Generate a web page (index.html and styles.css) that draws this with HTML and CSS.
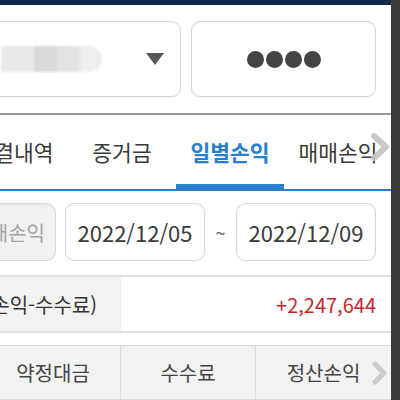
FILE: index.html
```html
<!DOCTYPE html>
<html lang="ko">
<head>
    <meta charset="UTF-8">
    <meta name="viewport" content="width=device-width, initial-scale=1.0">
    <title>일별손익</title>
    <link rel="stylesheet" href="styles.css">
</head>
<body>
    <div class="screen">
        <div class="app">
            <div class="topbar"></div>

            <div class="account-row">
                <div class="account-select">
                    <div class="masked">
                        <span class="m1"></span><span class="m2"></span><span class="m3"></span><span class="m4"></span>
                    </div>
                    <span class="caret"></span>
                </div>
                <div class="password">
                    <span class="dot"></span><span class="dot"></span><span class="dot"></span><span class="dot"></span>
                </div>
            </div>

            <div class="tabs">
                <div class="tab-list">
                    <div class="tab">체결내역</div>
                    <div class="tab">증거금</div>
                    <div class="tab active">일별손익</div>
                    <div class="tab">매매손익</div>
                </div>
                <svg class="more" width="24" height="28" viewBox="0 0 24 28">
                    <polyline points="5,3 17,14 5,25" fill="none" stroke="#c4c4c4" stroke-width="6" stroke-linecap="round" stroke-linejoin="round"/>
                </svg>
            </div>

            <div class="date-row">
                <div class="btn-disabled">매매손익</div>
                <div class="date-input">2022/12/05</div>
                <span class="tilde">~</span>
                <div class="date-input">2022/12/09</div>
            </div>

            <div class="summary">
                <div class="summary-label">정산손익(매매손익-수수료)</div>
                <div class="summary-value">+2,247,644</div>
            </div>

            <div class="table-head">
                <div class="th">약정대금</div>
                <div class="th">수수료</div>
                <div class="th">정산손익</div>
                <svg class="more head-more" width="18" height="24" viewBox="0 0 18 24">
                    <polyline points="4,3 13,12 4,21" fill="none" stroke="#c8c8c8" stroke-width="5" stroke-linecap="round" stroke-linejoin="round"/>
                </svg>
            </div>
        </div>
        <div class="edge"></div>
    </div>
</body>
</html>
```

FILE: styles.css
```css
body {
    margin: 0;
    font-family: 'Noto Sans CJK KR', 'Noto Sans', sans-serif;
    color: #333;
    background: #fff;
}
.screen {
    display: flex;
    width: 400px;
    height: 400px;
    overflow: hidden;
}
.app {
    width: 391px;
    flex: none;
    overflow: hidden;
}
.edge {
    width: 9px;
    flex: none;
    background: #3b3b3b;
}
.topbar {
    height: 5px;
    background: #14294c;
}

/* account */
.account-row {
    display: flex;
    gap: 10px;
    padding: 16px 15px 16px 0;
    border-bottom: 2px solid #9a9a9a;
}
.account-select,
.password {
    height: 76px;
    box-sizing: border-box;
    border: 1px solid #d6d6d6;
    border-radius: 9px;
    box-shadow: inset 0 1px 2px rgba(0,0,0,0.06), 0 1px 1px rgba(0,0,0,0.04);
    display: flex;
    align-items: center;
}
.account-select {
    flex: none;
    width: 197px;
    margin-left: -16px;
    padding: 0 16px;
    justify-content: space-between;
}
.masked {
    display: flex;
    height: 26px;
    filter: blur(0.8px);
}
.masked span {
    display: block;
    height: 100%;
}
.m1 { width: 33px; background: #e9e9e9; }
.m2 { width: 23px; background: #d9d9d9; }
.m3 { width: 23px; background: #e3e3e3; }
.m4 { width: 22px; background: #eeeeee; border-radius: 0 13px 13px 0; }
.caret {
    width: 0;
    height: 0;
    border-left: 9.5px solid transparent;
    border-right: 9.5px solid transparent;
    border-top: 12px solid #585858;
}
.password {
    flex: none;
    width: 185px;
    justify-content: center;
    gap: 2px;
}
.dot {
    width: 17px;
    height: 17px;
    border-radius: 50%;
    background: #444;
}

/* tabs */
.tabs {
    position: relative;
    border-bottom: 2px solid #2a7fcc;
}
.tab-list {
    display: flex;
    margin-left: -40px;
}
.tab {
    flex: none;
    width: 108px;
    height: 74px;
    line-height: 74px;
    text-align: center;
    font-size: 21.5px;
    color: #3a3a3a;
    box-sizing: border-box;
    white-space: nowrap;
}
.tab.active {
    color: #2a7fcc;
    font-weight: bold;
    border-bottom: 5px solid #2a7fcc;
    line-height: 74px;
}
.more {
    position: absolute;
    right: -2px;
    top: 18px;
    opacity: 0.9;
}

/* dates */
.date-row {
    display: flex;
    align-items: center;
    padding: 12px 15px 14px 0;
    border-bottom: 2px solid #e2e2e2;
}
.btn-disabled,
.date-input {
    height: 58px;
    box-sizing: border-box;
    border: 1px solid #d8d8d8;
    border-radius: 9px;
    display: flex;
    align-items: center;
    box-shadow: inset 0 1px 2px rgba(0,0,0,0.06);
}
.btn-disabled {
    flex: none;
    width: 72px;
    margin-left: -16px;
    margin-right: 9px;
    padding-right: 10px;
    justify-content: flex-end;
    background: #f1f1f1;
    color: #a4a4a4;
    font-size: 20px;
    white-space: nowrap;
    overflow: hidden;
}
.date-input {
    flex: none;
    width: 140px;
    justify-content: center;
    font-size: 22px;
    color: #3a3a3a;
}
.tilde {
    width: 31px;
    text-align: center;
    font-size: 18px;
    color: #555;
}

/* summary */
.summary {
    display: flex;
    height: 54px;
    border-bottom: 2px solid #e2e2e2;
}
.summary-label {
    flex: none;
    width: 121px;
    background: #f2f2f2;
    display: flex;
    align-items: center;
    justify-content: flex-end;
    padding-right: 24px;
    box-sizing: border-box;
    white-space: nowrap;
    overflow: hidden;
    font-size: 20px;
    color: #333;
}
.summary-value {
    flex: 1;
    display: flex;
    align-items: center;
    justify-content: flex-end;
    padding-right: 15px;
    font-size: 20px;
    color: #c6272d;
}

/* table header */
.table-head {
    position: relative;
    display: flex;
    margin-top: 12px;
    margin-left: -14px;
    height: 53px;
    background: #f2f2f2;
    border-top: 1px solid #dcdcdc;
    border-bottom: 1px solid #dcdcdc;
}
.th {
    width: 135px;
    flex: none;
    display: flex;
    align-items: center;
    justify-content: center;
    font-size: 20px;
    color: #444;
    border-right: 1px solid #dcdcdc;
    box-sizing: border-box;
}
.th:last-of-type {
    border-right: none;
}
.head-more {
    right: 2px;
    top: 15px;
}
```
